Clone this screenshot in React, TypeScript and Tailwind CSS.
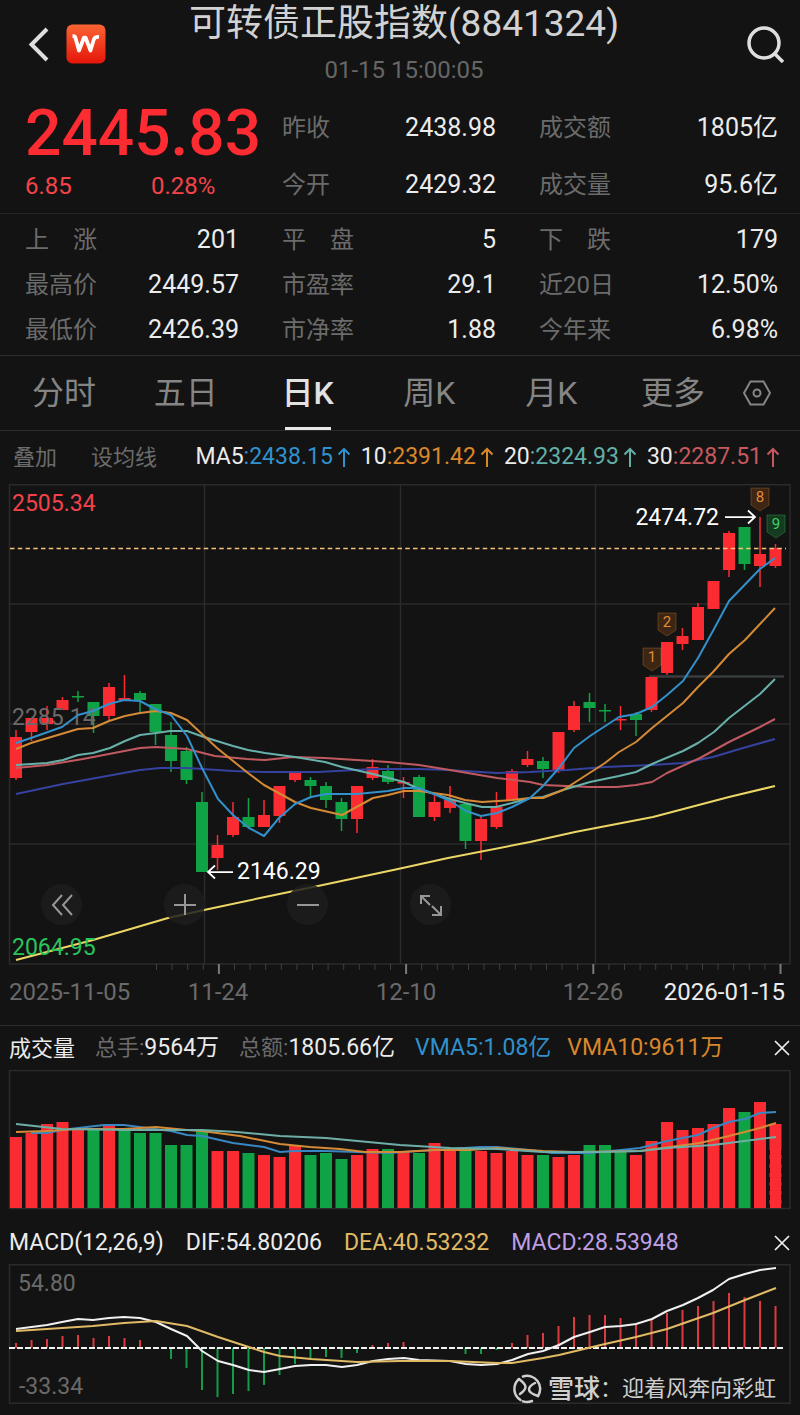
import React from 'react';

type Color = 'r' | 'g';
type Point = [number, number];
// color, body top, body bottom, wick top, wick bottom
type Candle = [Color, number, number, number, number];

const RED = '#fb2b32';
const GREEN = '#10a345';
const GRID = '#2b2b2b';

const quotes = [
  ['昨收', '2438.98'],
  ['成交额', '1805亿'],
  ['今开', '2429.32'],
  ['成交量', '95.6亿'],
];

const stats = [
  ['上　涨', '201'],
  ['平　盘', '5'],
  ['下　跌', '179'],
  ['最高价', '2449.57'],
  ['市盈率', '29.1'],
  ['近20日', '12.50%'],
  ['最低价', '2426.39'],
  ['市净率', '1.88'],
  ['今年来', '6.98%'],
];

const tabs = ['分时', '五日', '日K', '周K', '月K', '更多'];

const averages = [
  { name: 'MA5', value: '2438.15', className: 'text-[#3191cd]' },
  { name: '10', value: '2391.42', className: 'text-[#d9872a]' },
  { name: '20', value: '2324.93', className: 'text-[#62b0a9]' },
  { name: '30', value: '2287.51', className: 'text-[#c65860]' },
];

const candles: Candle[] = [
  ['r', 737, 778, 730, 780],
  ['r', 718, 732, 718, 741],
  ['r', 718, 724, 706, 730],
  ['r', 700, 710, 697, 710],
  ['g', 696, 697, 691, 702],
  ['g', 702, 716, 702, 733],
  ['r', 687, 716, 683, 720],
  ['r', 698, 700, 675, 700],
  ['g', 693, 700, 691, 712],
  ['g', 704, 732, 704, 745],
  ['g', 735, 761, 722, 772],
  ['g', 751, 780, 747, 784],
  ['g', 802, 872, 792, 872],
  ['r', 845, 858, 835, 870],
  ['r', 817, 835, 802, 837],
  ['g', 817, 827, 798, 828],
  ['r', 815, 827, 800, 827],
  ['r', 786, 816, 786, 823],
  ['r', 773, 780, 772, 782],
  ['g', 780, 786, 777, 798],
  ['g', 786, 800, 782, 808],
  ['g', 802, 819, 798, 831],
  ['r', 786, 819, 786, 833],
  ['r', 767, 778, 759, 780],
  ['g', 771, 782, 765, 784],
  ['r', 782, 783, 777, 798],
  ['g', 777, 817, 775, 817],
  ['r', 802, 817, 794, 821],
  ['r', 800, 808, 786, 813],
  ['g', 804, 841, 804, 849],
  ['r', 819, 841, 816, 860],
  ['r', 807, 827, 792, 829],
  ['r', 771, 800, 769, 800],
  ['r', 759, 765, 751, 767],
  ['g', 761, 769, 757, 778],
  ['r', 732, 770, 732, 773],
  ['r', 706, 730, 701, 732],
  ['g', 702, 708, 693, 722],
  ['g', 710, 711, 704, 722],
  ['r', 719, 720, 706, 730],
  ['g', 714, 720, 712, 736],
  ['r', 677, 710, 677, 712],
  ['r', 642, 673, 642, 675],
  ['r', 636, 644, 628, 650],
  ['r', 607, 640, 603, 640],
  ['r', 581, 609, 581, 609],
  ['r', 533, 570, 531, 577],
  ['g', 527, 564, 527, 570],
  ['r', 554, 566, 517, 587],
  ['r', 548, 566, 544, 568],
];

const volumeColors = 'rrrrrgrgggggg' + 'rrgrrrgggrrgrgrrgrrrrgrrgggr' + 'rrrrrrgrr';
const volumes = [
  1137, 1133, 1124, 1122, 1130, 1130, 1125, 1130, 1133, 1133, 1145, 1145, 1131, 1151, 1151, 1153, 1155, 1157, 1145,
  1155, 1153, 1159, 1155, 1149, 1149, 1152, 1153, 1143, 1151, 1151, 1151, 1153, 1151, 1155, 1155, 1157, 1155, 1145,
  1145, 1151, 1155, 1141, 1122, 1130, 1128, 1124, 1108, 1112, 1102, 1124,
];

const macdZero = 1348;
const macdBars = [
  1343, 1340, 1339, 1336, 1335, 1338, 1336, 1338, 1340, 1348, 1359, 1368, 1390, 1397, 1394, 1391, 1385, 1375, 1364,
  1359, 1357, 1358, 1353, 1345, 1343, 1342, 1348, 1348, 1348, 1354, 1354, 1350, 1343, 1335, 1333, 1326, 1317, 1315,
  1315, 1318, 1323, 1319, 1313, 1310, 1306, 1301, 1293, 1297, 1301, 1306,
];

const ma5: Point[] = [
  [16, 743], [31, 738], [62, 727], [78, 715], [93, 711], [109, 704], [124, 700], [140, 701], [155, 709], [171, 715],
  [187, 736], [202, 768], [218, 799], [233, 815], [249, 828], [264, 836], [279, 818], [295, 804], [311, 797],
  [326, 794], [357, 794], [388, 791], [404, 788], [419, 788], [434, 794], [450, 801], [466, 811], [481, 816],
  [497, 813], [512, 807], [530, 798], [543, 786], [559, 768], [574, 748], [590, 736], [619, 717], [636, 714],
  [652, 707], [667, 695], [683, 681], [698, 658], [714, 629], [729, 601], [760, 569], [775, 558],
];
const ma10: Point[] = [
  [16, 749], [31, 743], [78, 729], [93, 728], [109, 721], [125, 716], [140, 713], [156, 711], [171, 713], [187, 720],
  [217, 748], [248, 773], [264, 785], [295, 802], [311, 808], [342, 815], [373, 798], [388, 795], [404, 791],
  [419, 791], [448, 795], [465, 800], [482, 802], [512, 800], [530, 798], [543, 798], [563, 790], [574, 783],
  [605, 763], [619, 752], [636, 742], [652, 728], [683, 703], [698, 687], [713, 672], [729, 654], [745, 640],
  [760, 624], [775, 608],
];
const ma20: Point[] = [
  [16, 765], [47, 763], [63, 760], [78, 755], [93, 753], [110, 748], [125, 741], [140, 735], [156, 733], [170, 731],
  [187, 731], [204, 737], [233, 746], [248, 750], [265, 753], [295, 757], [325, 762], [342, 767], [373, 774],
  [404, 782], [419, 789], [450, 799], [465, 803], [482, 807], [496, 807], [512, 803], [530, 798], [543, 797],
  [563, 790], [590, 782], [619, 776], [636, 772], [652, 764], [683, 751], [698, 743], [714, 732], [729, 718],
  [760, 694], [775, 679],
];
const ma30: Point[] = [
  [16, 768], [47, 765], [83, 759], [140, 748], [156, 747], [187, 749], [215, 756], [247, 759], [265, 760],
  [293, 757], [325, 758], [388, 762], [419, 765], [450, 770], [497, 778], [530, 782], [543, 785], [590, 787],
  [617, 787], [636, 785], [652, 782], [667, 773], [700, 758], [729, 742], [760, 727], [775, 719],
];
const ma60: Point[] = [
  [16, 794], [63, 784], [140, 770], [160, 768], [187, 768], [233, 771], [265, 772], [318, 772], [373, 769],
  [419, 769], [448, 770], [497, 773], [530, 772], [567, 770], [605, 767], [652, 765], [683, 763], [713, 757],
  [743, 748], [775, 739],
];
const ma250: Point[] = [
  [16, 960], [93, 940], [168, 918], [204, 910], [265, 897], [318, 886], [398, 869], [448, 858], [530, 842],
  [575, 832], [653, 817], [729, 797], [775, 786],
];

const vma5: Point[] = [
  [31, 1133], [47, 1133], [62, 1130], [78, 1128], [104, 1125], [124, 1125], [155, 1129], [171, 1131], [187, 1135],
  [202, 1136], [233, 1143], [264, 1147], [280, 1152], [295, 1151], [326, 1151], [357, 1152], [388, 1153],
  [419, 1151], [450, 1149], [480, 1147], [497, 1147], [530, 1150], [552, 1153], [590, 1153], [621, 1150],
  [640, 1148], [667, 1141], [698, 1135], [713, 1128], [729, 1122], [745, 1119], [760, 1113], [776, 1112],
];
const vma10: Point[] = [
  [16, 1132], [47, 1131], [78, 1129], [124, 1129], [156, 1127], [187, 1130], [202, 1131], [240, 1136], [280, 1144],
  [310, 1147], [340, 1149], [365, 1152], [400, 1152], [435, 1150], [470, 1150], [497, 1148], [543, 1151],
  [574, 1152], [640, 1151], [670, 1147], [700, 1143], [729, 1136], [760, 1128], [776, 1123],
];
const vma20: Point[] = [
  [16, 1124], [62, 1129], [124, 1130], [202, 1130], [237, 1132], [280, 1136], [326, 1138], [400, 1145], [450, 1148],
  [497, 1149], [543, 1152], [600, 1152], [640, 1151], [667, 1148], [713, 1145], [776, 1137],
];

const dif: Point[] = [
  [16, 1329], [47, 1325], [62, 1322], [78, 1319], [93, 1320], [109, 1318], [124, 1317], [140, 1318], [156, 1322],
  [171, 1329], [187, 1336], [202, 1351], [218, 1361], [233, 1365], [249, 1370], [264, 1372], [280, 1369],
  [295, 1366], [311, 1365], [326, 1365], [342, 1367], [357, 1365], [373, 1361], [388, 1359], [404, 1358],
  [419, 1360], [450, 1361], [466, 1364], [481, 1365], [497, 1364], [512, 1360], [528, 1354], [543, 1351],
  [559, 1345], [574, 1337], [590, 1332], [605, 1327], [621, 1326], [636, 1324], [652, 1319], [667, 1311],
  [683, 1305], [698, 1298], [713, 1290], [729, 1279], [745, 1274], [760, 1270], [776, 1268],
];
const dea: Point[] = [
  [16, 1331], [47, 1329], [93, 1326], [124, 1323], [156, 1321], [187, 1326], [218, 1337], [264, 1352], [280, 1356],
  [311, 1359], [357, 1362], [400, 1361], [450, 1361], [497, 1363], [512, 1363], [543, 1358], [559, 1355],
  [605, 1344], [636, 1337], [667, 1329], [713, 1313], [745, 1300], [776, 1288],
];

const flags = [
  { x: 760, y: 488, label: '8', fill: '#3d2613', color: '#e08c36' },
  { x: 776, y: 515, label: '9', fill: '#143a20', color: '#45cf68' },
  { x: 667, y: 613, label: '2', fill: '#3d2613', color: '#e08c36' },
  { x: 652, y: 648, label: '1', fill: '#3d2613', color: '#e08c36' },
];

const barX = (i: number) => 16 + i * 15.5;

function Line({ points, color, width = 2 }: { points: Point[]; color: string; width?: number }) {
  return (
    <polyline
      points={points.map((p) => p.join(',')).join(' ')}
      fill="none"
      stroke={color}
      strokeWidth={width}
      strokeLinejoin="round"
    />
  );
}

function StatItem({ label, value }: { label: string; value: string }) {
  return (
    <div className="flex items-center justify-between">
      <dt className="text-2xl text-[#6b6b6b]">{label}</dt>
      <dd className="text-[25px] text-[#ececec]">{value}</dd>
    </div>
  );
}

function UpArrow() {
  return (
    <svg width="14" height="22" viewBox="0 0 14 22" fill="none" stroke="currentColor" strokeWidth="2" aria-label="上升">
      <path d="M7 20V2M1.5 7.5 7 2l5.5 5.5" />
    </svg>
  );
}

function CloseButton({ label }: { label: string }) {
  return (
    <button type="button" aria-label={label} className="ml-auto text-[#f0f0f0]">
      <svg width="16" height="16" viewBox="0 0 16 16" fill="none" stroke="currentColor" strokeWidth="1.75">
        <path d="M1 1l14 14M15 1 1 15" />
      </svg>
    </button>
  );
}

function ChartButton({ label, children }: { label: string; children: React.ReactNode }) {
  return (
    <button
      type="button"
      aria-label={label}
      className="flex size-[41px] items-center justify-center rounded-full bg-[#1d1d1d]/85 text-[#979797]"
    >
      <svg width="24" height="24" viewBox="0 0 24 24" fill="none" stroke="currentColor" strokeWidth="2">
        {children}
      </svg>
    </button>
  );
}

function PriceChart() {
  return (
    <svg viewBox="0 484 800 541" className="block h-auto w-full" role="img" aria-label="日K线图">
      <g stroke={GRID} strokeWidth="1.5">
        {[484.75, 604, 724, 844, 964].map((y) => (
          <line key={y} x1="9" x2="790" y1={y} y2={y} />
        ))}
        {[9.5, 204.5, 400.5, 595.5, 790].map((x) => (
          <line key={x} x1={x} x2={x} y1="484" y2="964" />
        ))}
      </g>
      <line x1="649" x2="784" y1="676.5" y2="676.5" stroke="#393d3d" strokeWidth="2.5" />

      {candles.map(([c, top, bottom, high, low], i) => (
        <g key={i} fill={c === 'r' ? RED : GREEN}>
          <rect x={barX(i) - 0.75} y={high} width="1.5" height={low - high} />
          <rect x={barX(i) - 6} y={top} width="12" height={Math.max(bottom - top, 1.5)} />
        </g>
      ))}

      <text x="12" y="725" fontSize="23" fill="#6a6a6a">2285.14</text>
      <Line points={ma250} color="#ecd766" />
      <Line points={ma60} color="#35429f" />
      <Line points={ma30} color="#c05a61" />
      <Line points={ma20} color="#67b1aa" />
      <Line points={ma10} color="#d58a35" />
      <Line points={ma5} color="#3290cb" />
      <line x1="10" x2="786" y1="548.5" y2="548.5" stroke="#f7c27a" strokeWidth="1.5" strokeDasharray="4.500 3.250" />

      <text x="12" y="511" fontSize="23" fill="#f4424a">2505.34</text>
      <text x="12" y="955" fontSize="23" fill="#2bc45c">2064.95</text>

      <g fill="none" stroke="#fff" strokeWidth="1.75">
        <path d="M725 517h30M748 510.5l7 6.5-7 6.5" />
        <path d="M233 872h-25M215 865.5l-7 6.5 7 6.5" />
      </g>
      <text x="719" y="525" fontSize="23" textAnchor="end" fill="#fff">2474.72</text>
      <text x="237" y="879" fontSize="23" fill="#fff">2146.29</text>

      {flags.map((f) => (
        <g key={f.label}>
          <path
            d={`M${f.x - 9} ${f.y}h18v17l-9 6-9-6z`}
            fill={f.fill}
            stroke={f.color}
            strokeOpacity="0.3"
          />
          <text x={f.x} y={f.y + 14} fontSize="15" textAnchor="middle" fill={f.color}>{f.label}</text>
        </g>
      ))}

      {Array.from({ length: 41 }, (_, i) => {
        const major = i % 12 === 4;
        const x = 156.5 + i * 15.6;
        return (
          <line
            key={i}
            x1={x}
            x2={x}
            y1="964"
            y2={major ? 974 : 970}
            stroke={major ? '#7a7a7a' : '#3f3f3f'}
            strokeWidth={major ? 2 : 1}
          />
        );
      })}
      <g fontSize="24" fill="#6a6a6a">
        <text x="9" y="1000">2025-11-05</text>
        <text x="218" y="1000" textAnchor="middle">11-24</text>
        <text x="406" y="1000" textAnchor="middle">12-10</text>
        <text x="593" y="1000" textAnchor="middle">12-26</text>
        <text x="785" y="1000" textAnchor="end" fill="#ececec">2026-01-15</text>
      </g>
    </svg>
  );
}

function VolumeChart() {
  return (
    <svg viewBox="0 1070 800 140" className="block h-auto w-full" role="img" aria-label="成交量图">
      <rect x="9.5" y="1070.5" width="780.5" height="138" fill="none" stroke={GRID} strokeWidth="1.5" />
      {volumes.map((top, i) => (
        <rect
          key={i}
          x={barX(i) - 6}
          y={top}
          width="12"
          height={1208 - top}
          fill={volumeColors[i] === 'r' ? RED : GREEN}
        />
      ))}
      <path d="M769.5 1150v58M781.5 1150v58" stroke="#131313" strokeDasharray="5 4" />
      <Line points={vma5} color="#3a86c0" />
      <Line points={vma10} color="#d58a35" />
      <Line points={vma20} color="#6faea6" />
    </svg>
  );
}

function MacdChart() {
  return (
    <svg viewBox="0 1264 800 151" className="block h-auto w-full" role="img" aria-label="MACD图">
      <rect x="9.5" y="1264.75" width="780.5" height="138.5" fill="none" stroke={GRID} strokeWidth="1.5" />
      {macdBars.map((y, i) => (
        <rect
          key={i}
          x={barX(i) - 1}
          y={Math.min(y, macdZero)}
          width="2"
          height={Math.abs(y - macdZero)}
          fill={y < macdZero ? '#dc3a41' : '#149a48'}
        />
      ))}
      <line x1="9" x2="784" y1={macdZero} y2={macdZero} stroke="#f2f2f2" strokeWidth="2" strokeDasharray="6 2" />
      <Line points={dif} color="#f0f0f0" />
      <Line points={dea} color="#e0ba64" />
      <g fontSize="23" fill="#6a6a6a">
        <text x="18" y="1291">54.80</text>
        <text x="19" y="1394">-33.34</text>
      </g>
    </svg>
  );
}

export default function App() {
  return (
    <main className="bg-[#131313] font-['Roboto','Noto_Sans_CJK_SC',sans-serif] text-[#ececec]">
      <header className="grid grid-cols-[1fr_auto_1fr] items-center pt-[2px] pr-4 pb-[6px] pl-6">
        <div className="mt-1 flex items-center gap-3">
          <button type="button" aria-label="返回" className="text-[#dedede]">
            <svg width="30" height="36" viewBox="0 0 30 36" fill="none" stroke="currentColor" strokeWidth="4">
              <path d="M23 3 7.500 18.500 23 34" />
            </svg>
          </button>
          <a href="#wind" aria-label="Wind">
            <svg width="40" height="40" viewBox="0 0 40 40">
              <defs>
                <linearGradient id="logo" x1="0" y1="0" x2="0" y2="1">
                  <stop offset="0" stopColor="#fb6434" />
                  <stop offset="1" stopColor="#e4160a" />
                </linearGradient>
              </defs>
              <rect x="0.5" y="0.5" width="39" height="39" rx="6" fill="url(#logo)" />
              <path
                d="M6.500 12H8Q9 12 9.300 13.200L13 26.500 18 13.500H19.500L24.500 26.500 27.800 15.500Q28.700 12.500 33 12.800"
                fill="none"
                stroke="#fff"
                strokeWidth="3.750"
                strokeLinejoin="round"
              />
            </svg>
          </a>
        </div>
        <div className="text-center">
          <h1 className="text-[37px] leading-[44px] text-[#d2d2d2]">可转债正股指数(8841324)</h1>
          <p className="mt-3 text-2xl leading-6 text-[#666]">01-15 15:00:05</p>
        </div>
        <button type="button" aria-label="搜索" className="mt-1 justify-self-end text-[#dedede]">
          <svg width="38" height="38" viewBox="0 0 38 38" fill="none" stroke="currentColor" strokeWidth="3.5">
            <circle cx="18" cy="18" r="15" />
            <path d="m28 28 9 9" />
          </svg>
        </button>
      </header>

      <section className="grid grid-cols-[minmax(0,214fr)_minmax(0,496fr)] gap-x-[43px] border-b border-[#262626] pt-2 pr-[22px] pl-[25px]">
        <div className="text-[#f5434a]">
          <p className="mt-[6px] text-[64px] leading-[64px] font-medium text-[#fd2b32]">2445.83</p>
          <p className="mt-[6px] grid grid-cols-[126px_auto] text-2xl leading-7">
            <span>6.85</span>
            <span>0.28%</span>
          </p>
        </div>
        <dl className="grid auto-rows-[57px] grid-cols-[214fr_239fr] gap-x-[43px] pt-[3px]">
          {quotes.map(([label, value]) => (
            <StatItem key={label} label={label} value={value} />
          ))}
        </dl>
      </section>

      <dl className="grid auto-rows-[45px] grid-cols-[214fr_214fr_239fr] gap-x-[43px] border-b border-[#2c2c2c] pt-[3px] pr-[22px] pb-[3px] pl-[25px]">
        {stats.map(([label, value]) => (
          <StatItem key={label} label={label} value={value} />
        ))}
      </dl>

      <nav className="flex h-[75px] items-stretch border-b border-[#2c2c2c] pl-[3px]">
        {tabs.map((tab) => (
          <button
            key={tab}
            type="button"
            aria-current={tab === '日K' ? 'page' : undefined}
            className={
              tab === '日K'
                ? 'relative flex-1 text-[32px] font-medium text-[#e2e2e2] after:absolute after:bottom-0 after:left-1/2 after:h-[3px] after:w-[46px] after:-translate-x-1/2 after:bg-[#e8e8e8]'
                : 'flex-1 text-[32px] text-[#858585]'
            }
          >
            {tab}
          </button>
        ))}
        <button type="button" aria-label="设置" className="w-[66px] pl-[9px] text-[#858585]">
          <svg width="28" height="26" viewBox="0 0 28 26" fill="none" stroke="currentColor" strokeWidth="2">
            <path d="M7.500 1.500h13L27 13l-6.500 11.500h-13L1 13z" />
            <circle cx="14" cy="13" r="3.500" />
          </svg>
        </button>
      </nav>

      <div className="flex h-[53px] items-center pr-5 pl-[13px] text-[22px]">
        <button type="button" className="text-[#6b6b6b]">叠加</button>
        <button type="button" className="ml-[34px] text-[#6b6b6b]">设均线</button>
        <ul className="ml-auto flex gap-[10px]">
          {averages.map((ma) => (
            <li key={ma.name} className="flex items-center text-[23px]">
              {ma.name}
              <span className={`flex items-center gap-1 ${ma.className}`}>
                :{ma.value}
                <UpArrow />
              </span>
            </li>
          ))}
        </ul>
      </div>

      <section className="relative">
        <PriceChart />
        <div className="absolute top-[400px] left-[41px] flex gap-[82px]">
          <ChartButton label="后退">
            <path d="M12 2 3 12l9 10M22 2l-9 10 9 10" />
          </ChartButton>
          <ChartButton label="放大">
            <path d="M12 1v21M1 12h22" />
          </ChartButton>
          <ChartButton label="缩小">
            <path d="M1 12h22" />
          </ChartButton>
          <ChartButton label="全屏">
            <path d="M2 11V3h9M2 3l9 9M13 22h9v-9M22 22l-9-9" />
          </ChartButton>
        </div>
      </section>

      <section className="border-t border-[#2c2c2c]">
        <div className="flex h-11 items-center pr-[10px] pl-[9px] text-[23px]">
          <h2 className="text-[22px]">成交量</h2>
          <p className="ml-5"><span className="text-[22px] text-[#6b6b6b]">总手:</span>9564万</p>
          <p className="ml-5"><span className="text-[22px] text-[#6b6b6b]">总额:</span>1805.66亿</p>
          <p className="ml-5 text-[#3191cd]">VMA5:1.08亿</p>
          <p className="ml-4 text-[#d9872a]">VMA10:9611万</p>
          <CloseButton label="关闭成交量" />
        </div>
        <VolumeChart />
      </section>

      <section className="relative pt-3">
        <div className="flex h-[42px] items-center pr-[10px] pl-[9px] text-[23px]">
          <h2>MACD(12,26,9)</h2>
          <p className="ml-[22px]">DIF:54.80206</p>
          <p className="ml-[22px] text-[#e0ba64]">DEA:40.53232</p>
          <p className="ml-[22px] text-[#bf9fe6]">MACD:28.53948</p>
          <CloseButton label="关闭MACD" />
        </div>
        <MacdChart />
        <p className="absolute right-6 bottom-[11px] flex items-center text-[22px] leading-[30px] text-[#cfcfcf]">
          <svg
            width="30"
            height="30"
            viewBox="0 0 30 30"
            fill="none"
            stroke="currentColor"
            strokeWidth="2.5"
            strokeLinecap="round"
            className="mr-[6px]"
          >
            <path d="M7 5A13 13 0 0 0 8.500 26" />
            <path d="M11 2.500A13 13 0 0 1 26 22" />
            <path d="M11 27.400A13 13 0 0 0 20 27" />
            <path d="M7 5Q13.500 10 13.500 13T8 20" />
            <path d="M23 9Q17 12 17 15.500T26 22" />
          </svg>
          <span className="text-[26px] font-medium">雪球</span>
          <span>：迎着风奔向彩虹</span>
        </p>
      </section>
    </main>
  );
}
